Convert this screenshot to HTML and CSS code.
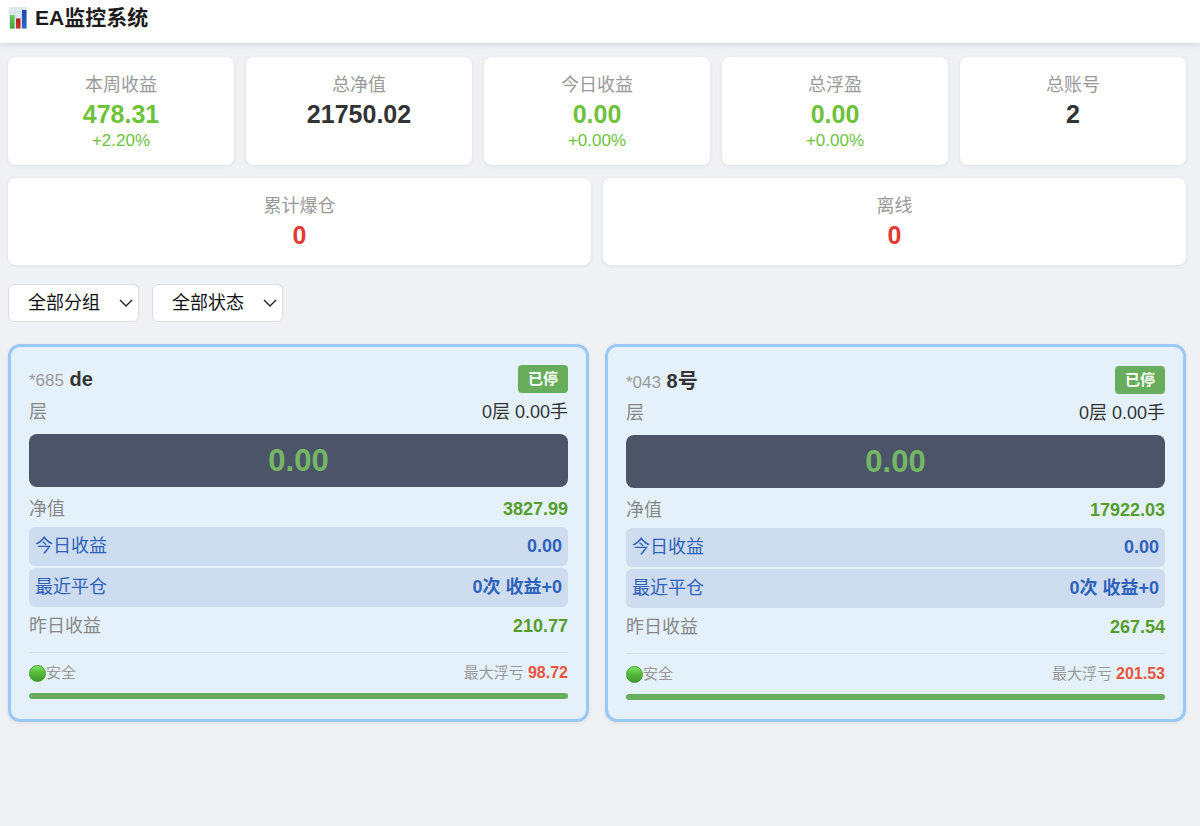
FILE: index.html
```html
<!DOCTYPE html>
<html lang="zh-CN">
<head>
<meta charset="utf-8">
<meta name="viewport" content="width=device-width, initial-scale=1">
<title>EA监控系统</title>
<link rel="stylesheet" href="styles.css">
</head>
<body>
<header class="topbar">
  <svg class="logo" viewBox="0 0 18 22" aria-hidden="true">
    <defs>
      <linearGradient id="bar-green" x2="0" y2="1"><stop stop-color="#6acb58"/><stop offset="1" stop-color="#3da531"/></linearGradient>
      <linearGradient id="bar-red" x2="0" y2="1"><stop stop-color="#ad2222"/><stop offset="1" stop-color="#d33029"/></linearGradient>
      <linearGradient id="bar-blue" x2="0" y2="1"><stop stop-color="#2046a4"/><stop offset="1" stop-color="#2c69ce"/></linearGradient>
    </defs>
    <path fill="#dfe9f0" d="M0 0h18v22H0z"/>
    <path stroke="#cbd8e3" stroke-width=".6" d="M0 5.500h18M0 11h18M0 16.500h18M6 0v22M12 0v22"/>
    <path fill="url(#bar-green)" d="M1 8h4.500v13.500H1z"/>
    <path fill="url(#bar-red)" d="M7 11.500h4.500v10H7z"/>
    <path fill="url(#bar-blue)" d="M13 3h4.500v18.500H13z"/>
  </svg>
  <h1 class="title">EA监控系统</h1>
</header>
<main class="page">
  <section class="stats stats-five">
    <div class="stat"><div class="stat-label">本周收益</div><div class="stat-value up">478.31</div><div class="stat-rate up">+2.20%</div></div>
    <div class="stat"><div class="stat-label">总净值</div><div class="stat-value">21750.02</div></div>
    <div class="stat"><div class="stat-label">今日收益</div><div class="stat-value up">0.00</div><div class="stat-rate up">+0.00%</div></div>
    <div class="stat"><div class="stat-label">总浮盈</div><div class="stat-value up">0.00</div><div class="stat-rate up">+0.00%</div></div>
    <div class="stat"><div class="stat-label">总账号</div><div class="stat-value">2</div></div>
  </section>
  <section class="stats stats-two">
    <div class="stat"><div class="stat-label">累计爆仓</div><div class="stat-value down">0</div></div>
    <div class="stat"><div class="stat-label">离线</div><div class="stat-value down">0</div></div>
  </section>
  <form class="filters">
    <div class="picker">
      <select class="picker-select" aria-label="分组"><option>全部分组</option></select>
      <svg class="picker-arrow" viewBox="0 0 14 8" aria-hidden="true"><path d="M1 1l6 6 6-6"/></svg>
    </div>
    <div class="picker">
      <select class="picker-select" aria-label="状态"><option>全部状态</option></select>
      <svg class="picker-arrow" viewBox="0 0 14 8" aria-hidden="true"><path d="M1 1l6 6 6-6"/></svg>
    </div>
  </form>
  <section class="accounts">
    <article class="account">
      <div class="account-head">
        <h2 class="account-name"><span class="account-id">*685</span> de</h2>
        <span class="badge">已停</span>
      </div>
      <div class="row"><span class="row-label">层</span><span>0层 0.00手</span></div>
      <div class="floating">0.00</div>
      <div class="row"><span class="row-label">净值</span><strong class="gain">3827.99</strong></div>
      <div class="highlights">
        <div class="highlight"><span>今日收益</span><strong>0.00</strong></div>
        <div class="highlight"><span>最近平仓</span><strong>0次 收益+0</strong></div>
      </div>
      <div class="row"><span class="row-label">昨日收益</span><strong class="gain">210.77</strong></div>
      <div class="risk">
        <div class="risk-line">
          <span class="risk-state"><span class="dot"></span>安全</span>
          <span>最大浮亏 <strong class="loss">98.72</strong></span>
        </div>
        <div class="risk-bar"></div>
      </div>
    </article>
    <article class="account">
      <div class="account-head">
        <h2 class="account-name"><span class="account-id">*043</span> 8号</h2>
        <span class="badge">已停</span>
      </div>
      <div class="row"><span class="row-label">层</span><span>0层 0.00手</span></div>
      <div class="floating">0.00</div>
      <div class="row"><span class="row-label">净值</span><strong class="gain">17922.03</strong></div>
      <div class="highlights">
        <div class="highlight"><span>今日收益</span><strong>0.00</strong></div>
        <div class="highlight"><span>最近平仓</span><strong>0次 收益+0</strong></div>
      </div>
      <div class="row"><span class="row-label">昨日收益</span><strong class="gain">267.54</strong></div>
      <div class="risk">
        <div class="risk-line">
          <span class="risk-state"><span class="dot"></span>安全</span>
          <span>最大浮亏 <strong class="loss">201.53</strong></span>
        </div>
        <div class="risk-bar"></div>
      </div>
    </article>
  </section>
</main>
</body>
</html>
```
FILE: styles.css
```css
* { box-sizing: border-box; }

body {
  margin: 0;
  min-height: 100vh;
  background: #f0f1f5;
  color: #333;
  font: 18px/30px "Liberation Sans", "Noto Sans CJK SC", sans-serif;
}

.topbar {
  display: flex;
  align-items: center;
  gap: 8px;
  padding: 3px 9px 10px;
  background: #fff;
  box-shadow: 0 1px 6px rgba(0, 0, 0, .14);
}
.logo { width: 18px; height: 22px; }
.title { margin: 0; font-size: 21px; line-height: 30px; color: #1c1c1c; }

.page { padding: 14px 14px 14px 8px; }

.stats { display: grid; gap: 12px; margin-bottom: 13px; }
.stats-five { grid-template-columns: repeat(5, 1fr); }
.stats-two { grid-template-columns: repeat(2, 1fr); }
.stat {
  padding: 14px 12px;
  border-radius: 8px;
  background: #fff;
  box-shadow: 0 1px 4px rgba(0, 0, 0, .07);
  text-align: center;
}
.stat-label { line-height: 28px; color: #999; }
.stat-value { font-size: 25px; font-weight: 700; line-height: 31px; }
.stat-rate { font-size: 17px; line-height: 21px; }
.up { color: #6dc23c; }
.down { color: #e53935; }

.filters { display: flex; gap: 13px; margin: 19px 0 22px; }
.picker { display: grid; align-items: center; }
.picker-select {
  grid-area: 1 / 1;
  width: 131px;
  height: 38px;
  padding: 0 30px 0 19px;
  appearance: none;
  border: 1px solid #ddd;
  border-radius: 6px;
  background: #fff;
  color: #111;
  font: inherit;
}
.picker-arrow {
  grid-area: 1 / 1;
  justify-self: end;
  width: 14px;
  height: 8px;
  margin-right: 6px;
  fill: none;
  stroke: #222;
  stroke-width: 1.4;
  pointer-events: none;
}

.accounts { display: grid; grid-template-columns: repeat(2, 1fr); gap: 16px; }
.account {
  padding: 18px;
  border: 3px solid #9bc8f5;
  border-radius: 12px;
  background: #e4f1fb;
  box-shadow: 0 1px 4px rgba(0, 0, 0, .08);
}
.account-head {
  display: flex;
  align-items: center;
  justify-content: space-between;
  margin-bottom: 4px;
}
.account-name { margin: 0; font-size: 20px; line-height: normal; }
.account-id { font-size: 17px; font-weight: 400; color: #999; }
.badge {
  padding: 0 10px;
  border-radius: 4px;
  background: #67ad5b;
  color: #fff;
  font-size: 15px;
  font-weight: 700;
  line-height: 28px;
}
.row { display: flex; justify-content: space-between; }
.row-label { color: #888; }
.gain { color: #559e2e; }
.floating {
  margin: 7px 0;
  border-radius: 8px;
  background: #4c5567;
  color: #74b566;
  font-size: 31px;
  font-weight: 700;
  line-height: 53px;
  text-align: center;
}
.highlights { display: grid; gap: 2px; margin: 3px 0 4px; }
.highlight {
  display: flex;
  justify-content: space-between;
  padding: 0 6px;
  border-radius: 6px;
  background: #cddcef;
  color: #2f62bb;
  line-height: 39px;
}
.risk {
  margin-top: 11px;
  padding-top: 8px;
  border-top: 1px solid #d5e1eb;
  color: #999;
  font-size: 15px;
}
.risk-line { display: flex; justify-content: space-between; line-height: 24px; }
.risk-state { display: flex; align-items: center; }
.dot {
  width: 17px;
  height: 17px;
  border: 1px solid #429a2d;
  border-radius: 50%;
  background: linear-gradient(#7be65e, #55bd3b 45%, #3f9a2b);
}
.loss { color: #e95440; font-size: 16px; }
.risk-bar { height: 6px; margin: 8px 0 1px; border-radius: 3px; background: #67ad5b; }
```
